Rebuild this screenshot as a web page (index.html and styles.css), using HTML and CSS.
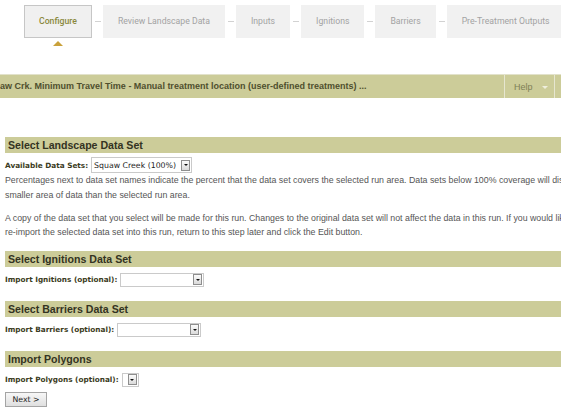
FILE: index.html
```html
<!DOCTYPE html>
<html lang="en">
<head>
<meta charset="utf-8">
<title>Configure</title>
<link rel="stylesheet" href="styles.css">
</head>
<body>
<div class="page">
  <nav class="steps">
    <div class="step active">Configure<span class="pointer"></span></div><span class="sep"></span>
    <div class="step">Review Landscape Data</div><span class="sep"></span>
    <div class="step">Inputs</div><span class="sep"></span>
    <div class="step">Ignitions</div><span class="sep"></span>
    <div class="step">Barriers</div><span class="sep"></span>
    <div class="step">Pre-Treatment Outputs</div><span class="sep"></span>
  </nav>

  <header class="titlebar">
    <div class="title">Squaw Crk. Minimum Travel Time - Manual treatment location (user-defined treatments) ...</div>
    <div class="help">Help<span class="caret"></span></div>
    <div class="tail"></div>
  </header>

  <main class="content">
    <section class="section landscape">
      <h2 class="section-head">Select Landscape Data Set</h2>
      <div class="field">
        <span class="label">Available Data Sets:</span>
        <span class="select sel-land"><span class="value">Squaw Creek (100%)</span><span class="arrow"></span></span>
      </div>
      <p>Percentages next to data set names indicate the percent that the data set covers the selected run area. Data sets below 100% coverage will display a<br>smaller area of data than the selected run area.</p>
      <p>A copy of the data set that you select will be made for this run. Changes to the original data set will not affect the data in this run. If you would like to<br>re-import the selected data set into this run, return to this step later and click the Edit button.</p>
    </section>

    <section class="section ignitions">
      <h2 class="section-head">Select Ignitions Data Set</h2>
      <div class="field">
        <span class="label">Import Ignitions (optional):</span>
        <span class="select sel-ign"><span class="value"></span><span class="arrow"></span></span>
      </div>
    </section>

    <section class="section barriers">
      <h2 class="section-head">Select Barriers Data Set</h2>
      <div class="field">
        <span class="label">Import Barriers (optional):</span>
        <span class="select sel-bar"><span class="value"></span><span class="arrow"></span></span>
      </div>
    </section>

    <section class="section polygons">
      <h2 class="section-head">Import Polygons</h2>
      <div class="field">
        <span class="label">Import Polygons (optional):</span>
        <span class="select sel-poly"><span class="value"></span><span class="arrow"></span></span>
      </div>
      <button class="next" type="button">Next &gt;</button>
    </section>
  </main>
</div>
</body>
</html>
```

FILE: styles.css
```css
html, body {
  margin: 0;
  padding: 0;
  background: #ffffff;
}

body {
  overflow: hidden;
  font-family: "Liberation Sans", Arial, sans-serif;
}

.page {
  width: 760px;
}

/* Wizard steps */
.steps {
  display: flex;
  align-items: center;
  padding: 5px 0 0 24px;
}

.step {
  position: relative;
  height: 31px;
  line-height: 31px;
  padding: 0 14px;
  border: 1px solid #f1f1f1;
  background: #f1f1f1;
  font-family: Roboto, "Liberation Sans", sans-serif;
  font-size: 8.7px;
  color: #a3a3a3;
  white-space: nowrap;
}

.step.active {
  border-color: #c6c6c6;
  background: #f0f0f0;
  color: #8a883c;
  font-weight: 500;
}

.pointer {
  position: absolute;
  left: 50%;
  top: calc(100% + 4px);
  margin-left: -5px;
  width: 0;
  height: 0;
  border-left: 5px solid transparent;
  border-right: 5px solid transparent;
  border-bottom: 5px solid #c9a13a;
}

.sep {
  width: 6px;
  height: 1px;
  margin: 0 2px 0 3px;
  background: #d2d2d2;
}

/* Title bar */
.titlebar {
  display: flex;
  height: 23px;
  margin-top: 36px;
  border-top: 1px solid #e2e2cb;
  background: #cccc99;
}

.title {
  flex: 0 0 521px;
  margin-left: -17px;
  line-height: 23px;
  font-size: 9px;
  font-weight: bold;
  color: #4f4f2e;
  white-space: nowrap;
  overflow: hidden;
}

.help {
  flex: 0 0 40px;
  display: flex;
  align-items: center;
  padding-left: 9px;
  border-left: 1px solid #e6e6d0;
  font-size: 9px;
  color: #7e8055;
}

.caret {
  width: 0;
  height: 0;
  margin-left: 9px;
  margin-top: 1px;
  border-left: 3px solid transparent;
  border-right: 3px solid transparent;
  border-top: 3px solid #eeeedc;
}

.tail {
  flex: 1;
  border-left: 1px solid #e6e6d0;
}

/* Content */
.content {
  padding-left: 5px;
}

.section-head {
  margin: 0;
  height: 16px;
  line-height: 16px;
  padding-left: 3px;
  background: #cccc99;
  font-size: 10.6px;
  font-weight: bold;
  color: #333322;
}

.landscape { margin-top: 39px; }
.ignitions { margin-top: 11px; }
.barriers { margin-top: 13px; }
.polygons { margin-top: 13px; }

.field {
  display: flex;
  align-items: center;
  height: 16px;
  margin-top: 5px;
}

.landscape .field {
  margin-top: 4px;
}

.label {
  font-family: "DejaVu Sans", Verdana, sans-serif;
  font-weight: bold;
  font-size: 7.3px;
  color: #3b3b22;
  white-space: nowrap;
}

.select {
  box-sizing: border-box;
  display: flex;
  align-items: center;
  justify-content: space-between;
  height: 14px;
  margin-left: 3px;
  border: 1px solid #cacaca;
  background: #ffffff;
}

.sel-land { width: 101px; height: 16px; }
.sel-ign { width: 84px; }
.sel-bar { width: 84px; }
.sel-poly { width: 17px; }

.value {
  padding-left: 2px;
  font-family: "DejaVu Sans", Verdana, sans-serif;
  font-size: 7.8px;
  color: #222222;
  white-space: nowrap;
}

.arrow {
  box-sizing: border-box;
  display: flex;
  align-items: center;
  justify-content: center;
  flex: 0 0 9px;
  height: 11px;
  margin-right: 1px;
  border: 1px solid #8e8e8e;
  background: linear-gradient(#fbfbfb, #dadada);
}

.arrow::before {
  content: "";
  width: 0;
  height: 0;
  border-left: 2px solid transparent;
  border-right: 2px solid transparent;
  border-top: 2px solid #111111;
}

p {
  margin: 0;
  font-size: 8.8px;
  line-height: 14.5px;
  color: #555555;
  white-space: nowrap;
}

p + p {
  margin-top: 8.5px;
}

.next {
  display: block;
  box-sizing: border-box;
  width: 42px;
  height: 15px;
  margin-top: 4px;
  padding: 0;
  border: 1px solid #a4a4a4;
  border-radius: 0;
  background: linear-gradient(#f7f7f7, #dfdfdf);
  font-family: "DejaVu Sans", Verdana, sans-serif;
  font-size: 7.8px;
  color: #222222;
}
```
